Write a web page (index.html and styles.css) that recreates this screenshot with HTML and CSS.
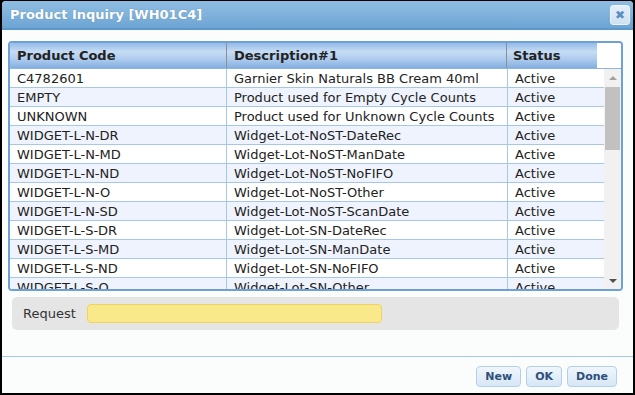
FILE: index.html
```html
<!DOCTYPE html>
<html lang="en">
<head>
    <meta charset="UTF-8">
    <title>Product Inquiry</title>
    <link rel="stylesheet" href="styles.css">
</head>
<body>
    <div class="dialog">
        <!-- Title bar -->
        <div class="titlebar">
            <div class="title">Product Inquiry [WH01C4]</div>
            <div class="close">&#x2716;</div>
        </div>

        <div class="content">
            <!-- Product grid -->
            <div class="grid">
                <div class="grid-head">
                    <div class="hcell">Product Code</div>
                    <div class="hcell">Description#1</div>
                    <div class="hcell">Status</div>
                    <div class="hcorner"></div>
                </div>
                <div class="grid-body">
                    <div class="rows">
                        <div class="row"><div class="cell">C4782601</div><div class="cell">Garnier Skin Naturals BB Cream 40ml</div><div class="cell">Active</div></div>
                        <div class="row"><div class="cell">EMPTY</div><div class="cell">Product used for Empty Cycle Counts</div><div class="cell">Active</div></div>
                        <div class="row"><div class="cell">UNKNOWN</div><div class="cell">Product used for Unknown Cycle Counts</div><div class="cell">Active</div></div>
                        <div class="row"><div class="cell">WIDGET-L-N-DR</div><div class="cell">Widget-Lot-NoST-DateRec</div><div class="cell">Active</div></div>
                        <div class="row"><div class="cell">WIDGET-L-N-MD</div><div class="cell">Widget-Lot-NoST-ManDate</div><div class="cell">Active</div></div>
                        <div class="row"><div class="cell">WIDGET-L-N-ND</div><div class="cell">Widget-Lot-NoST-NoFIFO</div><div class="cell">Active</div></div>
                        <div class="row"><div class="cell">WIDGET-L-N-O</div><div class="cell">Widget-Lot-NoST-Other</div><div class="cell">Active</div></div>
                        <div class="row"><div class="cell">WIDGET-L-N-SD</div><div class="cell">Widget-Lot-NoST-ScanDate</div><div class="cell">Active</div></div>
                        <div class="row"><div class="cell">WIDGET-L-S-DR</div><div class="cell">Widget-Lot-SN-DateRec</div><div class="cell">Active</div></div>
                        <div class="row"><div class="cell">WIDGET-L-S-MD</div><div class="cell">Widget-Lot-SN-ManDate</div><div class="cell">Active</div></div>
                        <div class="row"><div class="cell">WIDGET-L-S-ND</div><div class="cell">Widget-Lot-SN-NoFIFO</div><div class="cell">Active</div></div>
                        <div class="row"><div class="cell">WIDGET-L-S-O</div><div class="cell">Widget-Lot-SN-Other</div><div class="cell">Active</div></div>
                    </div>
                    <div class="scrollbar">
                        <div class="arrow up"></div>
                        <div class="track"><div class="thumb"></div></div>
                        <div class="arrow down"></div>
                    </div>
                </div>
            </div>

            <!-- Request entry -->
            <div class="request">
                <label class="request-label">Request</label>
                <div class="request-input"></div>
            </div>
        </div>

        <!-- Buttons -->
        <div class="footer">
            <div class="btn">New</div>
            <div class="btn">OK</div>
            <div class="btn">Done</div>
        </div>
    </div>
</body>
</html>
```

FILE: styles.css
```css
* {
    margin: 0;
    padding: 0;
    box-sizing: border-box;
}

html, body {
    width: 635px;
    height: 395px;
    overflow: hidden;
    background: #000;
}

body {
    font-family: "DejaVu Sans", Verdana, sans-serif;
    font-size: 13px;
    color: #222;
}

.dialog {
    margin: 1px 2px 0 2px;
    width: 631px;
    height: 392px;
    background: #fbfdfd;
    border-radius: 4px 4px 0 0;
    display: flex;
    flex-direction: column;
}

/* Title bar */
.titlebar {
    height: 29px;
    display: flex;
    align-items: center;
    justify-content: space-between;
    padding: 0 3px 0 8px;
    background: linear-gradient(#8fbde2, #7fb2dc 50%, #6da4d3);
    border-bottom: 2px solid #5e97cb;
    border-radius: 4px 4px 0 0;
}

.title {
    color: #fff;
    font-weight: bold;
    font-size: 13px;
    text-shadow: 0 0 1px rgba(0, 0, 0, 0.25);
}

.close {
    width: 20px;
    height: 20px;
    border: 1px solid #eaf3fb;
    border-radius: 3px;
    background: linear-gradient(#e4eff8, #cfe1f1);
    color: #5b8fc2;
    font-size: 12px;
    font-weight: bold;
    display: flex;
    align-items: center;
    justify-content: center;
}

.content {
    padding: 11px 10px 0 6px;
    flex: 1;
}

/* Grid */
.grid {
    border: 2px solid #6e9fd5;
    border-radius: 4px;
    overflow: hidden;
    background: #fff;
}

.grid-head {
    display: grid;
    grid-template-columns: 217px 280px 90px 1fr;
    height: 26px;
    border-bottom: 1px solid #8fb5de;
}

.hcell {
    font-weight: bold;
    padding-left: 7px;
    display: flex;
    align-items: center;
    background: linear-gradient(#94bbe7, #c6dcf4 35%, #aecbee 65%, #82afdf);
    border-right: 1px solid #8a8f96;
}

.hcell:nth-child(3) {
    border-right: none;
    padding-left: 6px;
}

.hcorner {
    background: #fff;
}

.grid-body {
    display: flex;
    height: 220px;
}

.rows {
    flex: 1;
    overflow: hidden;
}

.row {
    display: grid;
    grid-template-columns: 217px 281px 1fr;
    height: 19px;
    border-bottom: 1px solid #a7c7e9;
}

.row:nth-child(even) {
    background: #eef3fd;
}

.cell {
    padding-left: 7px;
    line-height: 19px;
    white-space: nowrap;
    overflow: hidden;
    border-right: 1px solid #a7c7e9;
}

.cell:last-child {
    border-right: none;
}

/* Fake scrollbar */
.scrollbar {
    width: 17px;
    background: #f1f1f1;
    display: flex;
    flex-direction: column;
}

.arrow {
    height: 17px;
    display: flex;
    align-items: center;
    justify-content: center;
}

.arrow::after {
    content: "";
    border-left: 4px solid transparent;
    border-right: 4px solid transparent;
}

.arrow.up::after {
    border-bottom: 4px solid #a3a3a3;
}

.arrow.down::after {
    border-top: 4px solid #505050;
}

.track {
    flex: 1;
    padding: 1px 1px 0 1px;
}

.thumb {
    height: 63px;
    background: #c1c1c1;
}

/* Request */
.request {
    margin: 6px 4px 0 4px;
    height: 33px;
    background: #e5e5e5;
    border-radius: 5px;
    display: flex;
    align-items: center;
    padding-left: 11px;
    gap: 11px;
}

.request-label {
    color: #333;
}

.request-input {
    width: 295px;
    height: 19px;
    background: #fae98b;
    border: 1px solid #efd263;
    border-radius: 4px;
}

/* Footer */
.footer {
    height: 37px;
    border-top: 1px solid #a3c9e5;
    display: flex;
    justify-content: flex-end;
    align-items: flex-start;
    gap: 5px;
    padding: 9px 16px 0 0;
}

.btn {
    height: 21px;
    padding: 0 8px;
    border: 1px solid #b3d0ea;
    border-radius: 4px;
    background: linear-gradient(#f0f6fc, #d7e7f6);
    color: #2f4f79;
    font-size: 11px;
    font-weight: bold;
    display: flex;
    align-items: center;
}
```
